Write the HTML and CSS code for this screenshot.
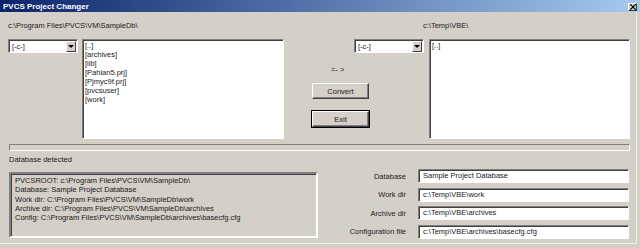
FILE: index.html
```html
<!DOCTYPE html>
<html lang="en">
  <head>
    <meta charset="UTF-8" />
    <meta name="viewport" content="width=device-width, initial-scale=1.0" />
    <title>PVCS Project Changer</title>
    <link rel="stylesheet" href="styles.css">
  </head>
  <body>
    <div class="window">
      <div class="titlebar">
        <span class="title">PVCS Project Changer</span>
        <span class="close">
          <svg width="6" height="6" viewBox="0 0 6 6">
            <path d="M0 0 L6 6 M6 0 L0 6" stroke="#000" stroke-width="1.2" />
          </svg>
        </span>
      </div>

      <div class="content">
        <div class="top">
          <div class="path-label left-path">c:\Program Files\PVCS\VM\SampleDb\</div>
          <div class="path-label right-path">c:\Temp\VBE\</div>

          <div class="combo">
            <span class="combo-text">[-c-]</span>
            <span class="combo-btn"><span class="arrow"></span></span>
          </div>
          <div class="listbox">
            <div>[..]</div>
            <div>[archives]</div>
            <div>[lib]</div>
            <div>[Pahian5.prj]</div>
            <div>[Pjmyc9f.prj]</div>
            <div>[pvcsuser]</div>
            <div>[work]</div>
          </div>

          <div class="middle">
            <div class="combo right-combo">
              <span class="combo-text">[-c-]</span>
              <span class="combo-btn"><span class="arrow"></span></span>
            </div>
            <div class="direction">=- &gt;</div>
            <button class="btn convert">Convert</button>
            <button class="btn exit">Exit</button>
          </div>

          <div class="listbox">
            <div>[..]</div>
          </div>
        </div>

        <div class="progress"></div>

        <div class="bottom">
          <div class="info">
            <div class="status">Database detected</div>
            <div class="info-box">
              <div>PVCSROOT: c:\Program Files\PVCS\VM\SampleDb\</div>
              <div>Database: Sample Project Database</div>
              <div>Work dir: C:\Program Files\PVCS\VM\SampleDb\work</div>
              <div>Archive dir: C:\Program Files\PVCS\VM\SampleDb\archives</div>
              <div>Config: C:\Program Files\PVCS\VM\SampleDb\archives\basecfg.cfg</div>
            </div>
          </div>

          <div class="fields">
            <label>Database</label>
            <div class="field">Sample Project Database</div>
            <label>Work dir</label>
            <div class="field">c:\Temp\VBE\work</div>
            <label>Archive dir</label>
            <div class="field">c:\Temp\VBE\archives</div>
            <label>Configuration file</label>
            <div class="field">c:\Temp\VBE\archives\basecfg.cfg</div>
          </div>
        </div>
      </div>
    </div>
  </body>
</html>
```

FILE: styles.css
```css
* {
  box-sizing: border-box;
}

body {
  margin: 0;
  font-family: "Liberation Sans", Arial, sans-serif;
  font-size: 7.5px;
  color: #1a1a1a;
  background: #d4d0c8;
}

.window {
  width: 640px;
  height: 248px;
  background: #d4d0c8;
  overflow: hidden;
}

.titlebar {
  height: 12px;
  display: flex;
  align-items: center;
  justify-content: space-between;
  padding: 0 3px 0 3px;
  background: linear-gradient(to right, #0a246a, #a6caf0);
}

.title {
  color: white;
  font-weight: bold;
  font-size: 8px;
}

.close {
  width: 9px;
  height: 8px;
  margin-top: 2px;
  background: #d4d0c8;
  border: 1px solid;
  border-color: #fff #404040 #404040 #fff;
  display: flex;
  align-items: center;
  justify-content: center;
}

.content {
  width: 637px;
  height: 232px;
  border-right: 1px solid #f2f0ec;
  border-bottom: 1px solid #f2f0ec;
}

/* upper half: two browsers and the buttons */
.top {
  display: grid;
  grid-template-columns: 74px 202px 145px 201px;
  grid-template-rows: 27px 100px;
  padding-left: 8px;
}

.path-label {
  align-self: center;
  white-space: nowrap;
}

.left-path {
  grid-column: 1 / 3;
}

.right-path {
  grid-column: 3 / 5;
  padding-left: 139px;
}

.combo {
  height: 14px;
  width: 70px;
  background: white;
  display: flex;
  align-items: center;
  justify-content: space-between;
  padding: 0 1px 0 3px;
  border: 1px solid;
  border-color: #808080 #fff #fff #808080;
  box-shadow: inset 1px 1px 0 #404040;
}

.combo-btn {
  width: 10px;
  height: 11px;
  background: #d4d0c8;
  border: 1px solid;
  border-color: #fff #404040 #404040 #fff;
  display: flex;
  align-items: center;
  justify-content: center;
}

.arrow {
  width: 0;
  height: 0;
  border-left: 3px solid transparent;
  border-right: 3px solid transparent;
  border-top: 3px solid #000;
}

.listbox {
  background: white;
  padding: 1px 2px;
  line-height: 9px;
  border: 1px solid;
  border-color: #808080 #fff #fff #808080;
  box-shadow: inset 1px 1px 0 #404040;
}

.middle {
  display: flex;
  flex-direction: column;
  align-items: flex-start;
}

.right-combo {
  align-self: flex-end;
  margin-right: 5px;
}

.direction {
  margin: 12px 0 0 47px;
  height: 10px;
}

.btn {
  font-family: inherit;
  font-size: 7.5px;
  width: 57px;
  height: 16px;
  margin-left: 28px;
  padding: 0;
  background: #d4d0c8;
  color: #1a1a1a;
  border: 1px solid;
  border-color: #fff #404040 #404040 #fff;
  box-shadow: inset -1px -1px 0 #808080;
}

.convert {
  margin-top: 8px;
}

.exit {
  margin-top: 12px;
  outline: 1px solid #000;
}

.progress {
  height: 7px;
  margin: 5px 6px 0 9px;
  border: 1px solid;
  border-color: #808080 #fff #fff #808080;
  background: #d4d0c8;
}

/* lower half: detected values and the target settings */
.bottom {
  display: grid;
  grid-template-columns: 309px 1fr;
  padding: 0 7px 0 9px;
}

.status {
  margin-top: 4px;
  height: 10px;
  line-height: 10px;
}

.info-box {
  margin-top: 7px;
  height: 66px;
  padding: 2px 4px;
  line-height: 9.3px;
  border: 2px solid;
  border-color: #808080 #fff #fff #808080;
  box-shadow: inset 1px 1px 0 #404040;
}

.fields {
  display: grid;
  grid-template-columns: 1fr 211px;
  column-gap: 12px;
  row-gap: 4.5px;
  padding-top: 18px;
  align-items: center;
}

.fields label {
  text-align: right;
}

.field {
  height: 14px;
  line-height: 12px;
  padding: 0 4px;
  background: white;
  white-space: nowrap;
  border: 1px solid;
  border-color: #808080 #fff #fff #808080;
  box-shadow: inset 1px 1px 0 #404040;
}
```
